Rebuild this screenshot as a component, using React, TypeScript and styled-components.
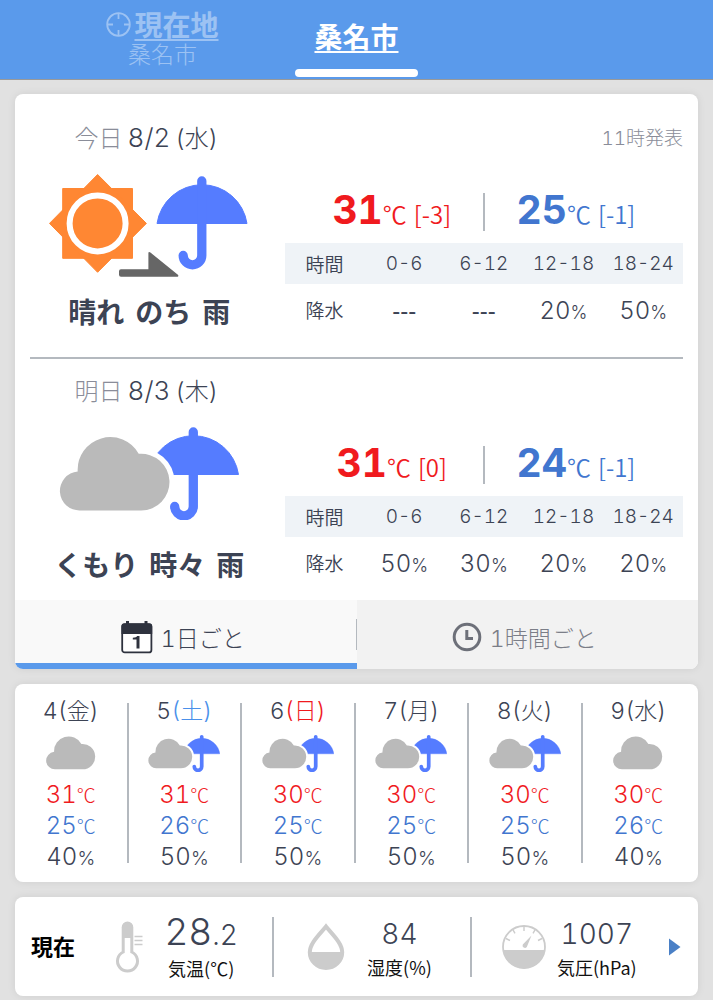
import React from "react";
import styled, { createGlobalStyle } from "styled-components";

const colors = {
  brand: "#5a9aeb",
  ink: "#3c4354",
  muted: "#8a8d99",
  high: "#f01a1e",
  low: "#4176cf",
  saturday: "#4a90ea",
  rule: "#b4b9bf",
  cloud: "#bababa",
  umbrella: "#557cff",
  meter: "#cccccc",
};

const cjk = `"Noto Sans CJK JP", sans-serif`;

const GlobalStyle = createGlobalStyle`
  *, *::before, *::after { box-sizing: border-box; }
  body {
    margin: 0;
    background: #e1e1e1;
    color: ${colors.ink};
    font-family: "Inter", "Noto Sans CJK JP", sans-serif;
    font-weight: 300;
    font-variant-numeric: tabular-nums;
  }
  h1, h2, p, ul, dl, dd, dt { margin: 0; padding: 0; font-weight: inherit; }
  button { font: inherit; font-variant-numeric: tabular-nums; color: inherit; border: 0; background: none; padding: 0; cursor: pointer; }
`;

/* ---------- header ---------- */

const Header = styled.header`
  display: grid;
  grid-template-columns: repeat(3, 194px);
  justify-content: center;
  height: 80px;
  background: ${colors.brand};
  border-bottom: 1px solid #999;
`;

const PlaceLink = styled.a<{ $active?: boolean }>`
  display: flex;
  flex-direction: column;
  align-items: center;
  justify-content: flex-start;
  padding-top: ${(p) => (p.$active ? 20 : 8)}px;
  color: #fff;
  opacity: ${(p) => (p.$active ? 1 : 0.4)};
  text-decoration: none;
`;

const PlaceName = styled.span`
  display: flex;
  align-items: center;
  gap: 3px;
  font-size: 28px;
  line-height: 32px;
  font-weight: 700;
  font-family: ${cjk};
  u { text-underline-offset: 3px; text-decoration-thickness: 2px; }
`;

const PlaceSub = styled.span`
  margin-top: 2px;
  font-size: 23px;
  line-height: 26px;
`;

const ActiveBar = styled.span`
  width: 123px;
  height: 8px;
  margin-top: 17px;
  border-radius: 4px;
  background: #fff;
`;

/* ---------- cards ---------- */

const Main = styled.main`
  display: flex;
  flex-direction: column;
  gap: 15px;
  padding: 14px 15px 4px;
`;

const Card = styled.section`
  background: #fff;
  border-radius: 8px;
  overflow: hidden;
  box-shadow: 0 0 8px rgba(0, 0, 0, 0.08);
`;

const DayList = styled.div`
  padding: 12px 15px 0;
`;

const Day = styled.article<{ $first?: boolean }>`
  display: grid;
  grid-template-columns: minmax(0, 1fr) 61%;
  padding-bottom: ${(p) => (p.$first ? 20 : 10)}px;
  border-bottom: ${(p) => (p.$first ? `2px solid ${colors.rule}` : "0")};
`;

const Summary = styled.div`
  display: flex;
  flex-direction: column;
  align-items: center;
  padding-right: 16px;
`;

const DayDate = styled.h2`
  padding-right: 6px;
  font-size: 24px;
  line-height: 64px;
  height: 66px;
  white-space: nowrap;
`;

const DayWord = styled.span`
  color: ${colors.muted};
  margin-right: 5px;
`;

const DayNumber = styled.span`
  font-size: 26px;
`;

const Weekday = styled.span`
  margin-left: 5px;
`;

const Condition = styled.p`
  display: flex;
  gap: 11px;
  font-family: ${cjk};
  font-size: 28px;
  line-height: 40px;
  font-weight: 700;
  margin-top: 13px;
  white-space: nowrap;
`;

const Detail = styled.div`
  display: flex;
  flex-direction: column;
`;

const Issued = styled.p`
  height: 66px;
  line-height: 66px;
  font-size: 19px;
  text-align: right;
  color: ${colors.muted};
`;

const Temps = styled.div`
  display: grid;
  grid-template-columns: 1fr 2px 1fr;
  align-items: center;
  justify-items: center;
  height: 71px;
  padding: 8px 16px 0;
`;

const TempDivider = styled.span`
  width: 2px;
  height: 38px;
  background: ${colors.rule};
`;

const Temp = styled.p<{ $kind: "high" | "low" }>`
  color: ${(p) => colors[p.$kind]};
  font-family: ${cjk};
  font-size: 24px;
  font-weight: 350;
  line-height: 40px;
  white-space: nowrap;
  strong { font-family: "Inter", sans-serif; font-size: 39px; font-weight: 700; }
`;

const Degree = styled.span`
  margin-right: 7px;
`;

const RainTable = styled.table`
  width: 100%;
  table-layout: fixed;
  border-collapse: collapse;
  th, td { padding: 0; text-align: center; font-weight: 350; white-space: nowrap; }
  th { font-size: 19px; }
  thead th { height: 41px; background: #eff3f7; }
  tbody th, tbody td { height: 53px; }
  tbody th { padding-bottom: 3px; }
  td { font-size: 24px; font-weight: 300; }
  small { font-size: 18px; }
`;

const NoValue = styled.span`
  font-family: "Liberation Sans", sans-serif;
`;

/* ---------- interval tabs ---------- */

const Tabs = styled.div`
  display: grid;
  grid-template-columns: 1fr 1fr;
`;

const Tab = styled.button<{ $active?: boolean }>`
  && {
    display: flex;
    align-items: center;
    justify-content: center;
    gap: 8px;
    height: 69px;
    padding: 10px 6px 0 0;
    font-size: 23px;
    font-weight: 300;
    white-space: nowrap;
    color: ${(p) => (p.$active ? colors.ink : "#7b7e88")};
    background: ${(p) => (p.$active ? "#f9f9f9" : "#f2f2f2")};
    border-bottom: 6px solid ${(p) => (p.$active ? colors.brand : "#f2f2f2")};
  }
  position: relative;
  &:first-child::after {
    content: "";
    position: absolute;
    right: 0;
    top: 19px;
    width: 1px;
    height: 31px;
    background: ${colors.rule};
  }
`;

/* ---------- week ---------- */

const Week = styled.ul`
  display: flex;
  padding: 19px 4px 19px 0;
  list-style: none;
`;

const WeekDay = styled.li`
  flex: 1;
  display: flex;
  flex-direction: column;
  align-items: center;
  height: 160px;
  white-space: nowrap;
  & + & { border-left: 2px solid ${colors.rule}; }
`;

const WeekDate = styled.p<{ $day: string }>`
  flex: none;
  font-size: 23px;
  line-height: 30px;
  margin-top: -7px;
  span { color: ${(p) => (p.$day === "土" ? colors.saturday : p.$day === "日" ? colors.high : "inherit")}; }
`;

const WeekIcon = styled.div`
  flex: none;
  display: flex;
  align-items: center;
  justify-content: center;
  height: 53px;
`;

const WeekValue = styled.p<{ $kind?: "high" | "low" }>`
  flex: none;
  color: ${(p) => (p.$kind ? colors[p.$kind] : "inherit")};
  font-size: 24px;
  line-height: 31px;
  height: 31px;
  small { font-size: 19px; }
`;

const SmallDegree = styled.small`
  font-family: ${cjk};
`;

/* ---------- current observations ---------- */

const Now = styled.div`
  display: grid;
  grid-template-columns: 60px minmax(0, 1fr) 31px;
  align-items: center;
  height: 99px;
`;

const NowTitle = styled.h2`
  padding: 0 0 4px 16px;
  font-family: ${cjk};
  font-size: 22px;
  line-height: 30px;
  font-weight: 700;
  color: #000;
  white-space: nowrap;
`;

const Readings = styled.dl`
  display: grid;
  grid-template-columns: repeat(3, 1fr);
`;

const Reading = styled.div`
  display: grid;
  grid-template-columns: 44px 80px;
  grid-template-rows: 60px;
  column-gap: 11px;
  align-items: center;
  justify-content: center;
  & + & { border-left: 2px solid ${colors.rule}; }
`;

const ReadingText = styled.div`
  display: flex;
  flex-direction: column-reverse;
  align-items: center;
  white-space: nowrap;
  dt { font-size: 18px; line-height: 26px; color: #111; font-weight: 400; font-family: ${cjk}; }
`;

const ReadingValue = styled.dd<{ $large?: boolean }>`
  font-size: ${(p) => (p.$large ? 37 : 28)}px;
  line-height: 40px;
  small { font-size: 28px; }
`;

const MoreButton = styled.button`
  display: flex;
  height: 60px;
  align-items: center;
`;

/* ---------- drawings ---------- */

const Umbrella = () => (
  <g>
    <path d="M109 51.5 A45.5 45.5 0 0 1 199 51.5 Z" fill={colors.umbrella} stroke={colors.umbrella} strokeLinejoin="round" />
    <path d="M153.8 9 V83.5 a9.3 9.3 0 0 1 -18.6 0" fill="none" stroke={colors.umbrella} strokeWidth="9.3" strokeLinecap="round" />
  </g>
);

const cloudPath =
  "M19.6 73.5 A19.6 19.6 0 0 1 17 34.4 A32.6 32.6 0 0 1 78 16.8 A28.4 28.4 0 1 1 80.5 73.5 Z";

const SunnyThenRain = () => (
  <svg width="200" height="106" viewBox="1 0 200 106" role="img" aria-label="晴れのち雨">
    <g fill="#ff8733" stroke="#ff8733" strokeLinejoin="round">
      <rect x="14.7" y="16.5" width="69.8" height="69.8" />
      <path d="M49.6 2.5 L98.4 51.4 L49.6 100.3 L1.5 51.4 Z" />
    </g>
    <circle cx="49.6" cy="51.4" r="28" fill="none" stroke="#fff" strokeWidth="6" />
    <path d="M73 97.2 H100.4 V80.5 q.8 -1 2 0 L130.2 103 q.4 1.7 -.6 1.8 H73 a2 2 0 0 1 -2 -2 V99.2 a2 2 0 0 1 2 -2 Z" fill="#666" />
    <Umbrella />
  </svg>
);

const CloudyRain = ({ width = 180, height = 95 }: { width?: number; height?: number }) => (
  <svg width={width} height={height} viewBox="0 0 180 95" role="img" aria-label="くもり時々雨">
    <g transform="translate(-19.5 -2)">
      <Umbrella />
    </g>
    <path d={cloudPath} transform="translate(1.7 12)" fill="#fff" stroke="#fff" strokeWidth="10" />
    <path d={cloudPath} transform="translate(1.7 12)" fill={colors.cloud} />
  </svg>
);

const Cloud = () => (
  <svg width="50" height="34" viewBox="-1 -1 111.5 76" role="img" aria-label="くもり">
    <path d={cloudPath} fill={colors.cloud} />
  </svg>
);

const LocateIcon = () => (
  <svg width="25" height="25" viewBox="0 0 25 25" fill="none" stroke="#fff" strokeWidth="1.8" aria-hidden="true">
    <circle cx="12.5" cy="12.5" r="11.3" />
    <path d="M12.5 1v6M12.5 18v6M1 12.5h6M18 12.5h6" />
  </svg>
);

const CalendarIcon = () => (
  <svg width="32" height="34" viewBox="0 0 32 34" aria-hidden="true">
    <rect x="1.2" y="4.2" width="29.2" height="28.2" rx="2.5" fill="#fff" stroke="#2e323e" strokeWidth="1.8" />
    <path d="M.5 14V6.500a3 3 0 0 1 3-3H5V1h3v2.500h15.500V1h3v2.500h1.700a3 3 0 0 1 3 3v7.500Z" fill="#2e323e" />
    <path d="M18.500 28.500h-3V19.500h-3.700v-1.800q3.700-.1 4.300-1.700h2.400Z" fill="#2e323e" />
  </svg>
);

const ClockIcon = () => (
  <svg width="30" height="30" viewBox="0 0 30 30" fill="none" stroke="#6d7079" strokeWidth="3" aria-hidden="true">
    <circle cx="15" cy="15" r="12.800" />
    <path d="M14.800 8v8.500H21" />
  </svg>
);

const ThermometerIcon = () => (
  <svg width="44" height="52" viewBox="-10 0 44 52" aria-hidden="true">
    <path d="M7.200 31V6.300a4.300 4.300 0 0 1 8.600 0V31a10 10 0 1 1-8.600 0Z" fill="#fff" stroke={colors.meter} strokeWidth="3" />
    <path d="M6 17V6.500a5.500 5.500 0 0 1 11 0V17Z" fill={colors.meter} />
    <path d="M18.500 15.500h8M18.500 19.500h8M18.500 23.500h8" stroke={colors.meter} strokeWidth="1.600" />
  </svg>
);

const DropIcon = () => (
  <svg width="44" height="48" viewBox="0 0 44 48" aria-hidden="true">
    <path d="M22 3.500C16 11 5.800 20 5.800 29.200a16.200 15.800 0 0 0 32.400 0C38.200 20 28 11 22 3.500Z" fill="#fff" stroke={colors.meter} strokeWidth="4" />
    <path d="M5 29h34a17 16 0 0 1-34 0Z" fill={colors.meter} />
  </svg>
);

const GaugeIcon = () => (
  <svg width="44" height="44" viewBox="0 0 44 44" aria-hidden="true">
    <circle cx="22" cy="22" r="21" fill="#fff" stroke={colors.meter} strokeWidth="1.800" />
    <path d="M1 25h42a21.200 21.200 0 0 1-42 0Z" fill={colors.meter} />
    <path d="M22 1v5M11 4.800l2 3.600M33 4.800l-2 3.600M4 13.500l4 2M40 13.500l-4 2" stroke={colors.meter} strokeWidth="1.400" />
    <path d="M29.500 10.500 24.800 22a2.400 2.400 0 0 1-4-2.600Z" fill={colors.meter} />
  </svg>
);

/* ---------- data ---------- */

const hours = ["0-6", "6-12", "12-18", "18-24"];

const days = [
  {
    word: "今日", date: "8/2", weekday: "(水)", issued: "11時発表", condition: ["晴れ", "のち", "雨"],
    icon: <SunnyThenRain />, high: "31", highDiff: "[-3]", low: "25", lowDiff: "[-1]",
    rain: [null, null, 20, 50],
  },
  {
    word: "明日", date: "8/3", weekday: "(木)", issued: "", condition: ["くもり", "時々", "雨"],
    icon: <CloudyRain />, high: "31", highDiff: "[0]", low: "24", lowDiff: "[-1]",
    rain: [50, 30, 20, 20],
  },
];

const week = [
  { date: 4, day: "金", rainy: false, high: 31, low: 25, rain: 40 },
  { date: 5, day: "土", rainy: true, high: 31, low: 26, rain: 50 },
  { date: 6, day: "日", rainy: true, high: 30, low: 25, rain: 50 },
  { date: 7, day: "月", rainy: true, high: 30, low: 25, rain: 50 },
  { date: 8, day: "火", rainy: true, high: 30, low: 25, rain: 50 },
  { date: 9, day: "水", rainy: false, high: 30, low: 26, rain: 40 },
];

const IconFrame = styled.div`
  display: flex;
  align-items: flex-start;
  justify-content: center;
  height: 106px;
`;

export default function App() {
  return (
    <>
      <GlobalStyle />
      <Header>
        <PlaceLink href="#current">
          <PlaceName><LocateIcon /><u>現在地</u></PlaceName>
          <PlaceSub>桑名市</PlaceSub>
        </PlaceLink>
        <PlaceLink href="#kuwana" $active aria-current="page">
          <PlaceName><u>桑名市</u></PlaceName>
          <ActiveBar />
        </PlaceLink>
      </Header>
      <Main>
        <Card>
          <DayList>
            {days.map((d, i) => (
              <Day key={d.word} $first={i === 0}>
                <Summary>
                  <DayDate><DayWord>{d.word}</DayWord><DayNumber>{d.date}</DayNumber><Weekday>{d.weekday}</Weekday></DayDate>
                  <IconFrame>{d.icon}</IconFrame>
                  <Condition>{d.condition.map((c) => <span key={c}>{c}</span>)}</Condition>
                </Summary>
                <Detail>
                  <Issued>{d.issued}</Issued>
                  <Temps>
                    <Temp $kind="high"><strong>{d.high}</strong><Degree>℃</Degree>{d.highDiff}</Temp>
                    <TempDivider />
                    <Temp $kind="low"><strong>{d.low}</strong><Degree>℃</Degree>{d.lowDiff}</Temp>
                  </Temps>
                  <RainTable>
                    <thead>
                      <tr>
                        <th scope="col">時間</th>
                        {hours.map((h) => <th scope="col" key={h}>{h}</th>)}
                      </tr>
                    </thead>
                    <tbody>
                      <tr>
                        <th scope="row">降水</th>
                        {d.rain.map((r, j) => (
                          <td key={hours[j]}>{r === null ? <NoValue>---</NoValue> : <>{r}<small>%</small></>}</td>
                        ))}
                      </tr>
                    </tbody>
                  </RainTable>
                </Detail>
              </Day>
            ))}
          </DayList>
          <Tabs role="tablist">
            <Tab type="button" role="tab" aria-selected="true" $active><CalendarIcon />1日ごと</Tab>
            <Tab type="button" role="tab" aria-selected="false"><ClockIcon />1時間ごと</Tab>
          </Tabs>
        </Card>

        <Card>
          <Week>
            {week.map((w) => (
              <WeekDay key={w.date}>
                <WeekDate $day={w.day}>{w.date}<span>({w.day})</span></WeekDate>
                <WeekIcon>{w.rainy ? <CloudyRain width={72} height={38} /> : <Cloud />}</WeekIcon>
                <WeekValue $kind="high">{w.high}<SmallDegree>℃</SmallDegree></WeekValue>
                <WeekValue $kind="low">{w.low}<SmallDegree>℃</SmallDegree></WeekValue>
                <WeekValue>{w.rain}<small>%</small></WeekValue>
              </WeekDay>
            ))}
          </Week>
        </Card>

        <Card>
          <Now>
            <NowTitle>現在</NowTitle>
            <Readings>
              <Reading>
                <ThermometerIcon />
                <ReadingText><dt>気温(℃)</dt><ReadingValue $large>28<small>.2</small></ReadingValue></ReadingText>
              </Reading>
              <Reading>
                <DropIcon />
                <ReadingText><dt>湿度(%)</dt><ReadingValue>84</ReadingValue></ReadingText>
              </Reading>
              <Reading>
                <GaugeIcon />
                <ReadingText><dt>気圧(hPa)</dt><ReadingValue>1007</ReadingValue></ReadingText>
              </Reading>
            </Readings>
            <MoreButton type="button" aria-label="詳細">
              <svg width="14" height="18" viewBox="0 0 14 18" aria-hidden="true">
                <path d="M2 .5 13.500 9 2 17.500Z" fill="#4a80c6" />
              </svg>
            </MoreButton>
          </Now>
        </Card>
      </Main>
    </>
  );
}
